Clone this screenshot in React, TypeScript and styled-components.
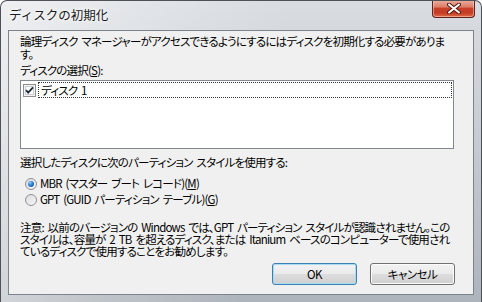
import React from "react";
import styled, { createGlobalStyle } from "styled-components";

const GlobalStyle = createGlobalStyle`
  html, body {
    margin: 0;
    padding: 0;
    background: #ffffff;
  }
  body {
    font-family: "Noto Sans CJK JP", "Liberation Sans", sans-serif;
  }
`;

const Window = styled.div`
  width: 482px;
  height: 302px;
  box-sizing: border-box;
  display: flex;
  flex-direction: column;
  border: 1px solid #4c5258;
  border-bottom: none;
  border-radius: 7px 7px 0 0;
  overflow: hidden;
  background:
    linear-gradient(100deg, rgba(255, 255, 255, 0.55) 0%, rgba(255, 255, 255, 0.2) 30%, rgba(255, 255, 255, 0) 55%),
    linear-gradient(to bottom, #d9dde2 0%, #c7ccd2 45%, #aeb4bb 100%);
`;

const TitleBar = styled.div`
  height: 29px;
  display: flex;
  justify-content: space-between;
  align-items: flex-start;
  padding-left: 8px;
  padding-right: 6px;
`;

const Title = styled.div`
  margin-top: 6px;
  font-size: 12.5px;
  line-height: 16px;
  color: #1a1a1a;
  text-shadow: 0 0 6px #ffffff, 0 0 3px #ffffff;
`;

const CloseButton = styled.div`
  width: 43px;
  height: 18px;
  margin-top: -1px;
  box-sizing: border-box;
  border: 1px solid #5e2219;
  border-top: none;
  border-radius: 0 0 4px 4px;
  display: flex;
  align-items: center;
  justify-content: center;
  background: linear-gradient(
    to bottom,
    #eab0a2 0%,
    #dc7e68 40%,
    #c8402a 50%,
    #c43a22 75%,
    #de6a48 100%
  );
  box-shadow: inset 0 0 0 1px rgba(255, 210, 200, 0.55);
`;

const Client = styled.div`
  flex: 1;
  margin: 0 7px 7px 7px;
  border: 1px solid #7b838c;
  background: #f0f0f0;
  padding: 4px 11px 0 11px;
  display: flex;
  flex-direction: column;
  font-size: 11.5px;
  color: #000000;
  font-feature-settings: "palt";
  letter-spacing: -0.8px;
  word-spacing: 2px;
`;

const Para = styled.div<{ $lh?: number; $mt?: number }>`
  line-height: ${(p) => p.$lh ?? 13}px;
  margin-top: ${(p) => p.$mt ?? 0}px;
  white-space: nowrap;
`;

const Key = styled.span`
  text-decoration: underline;
  text-underline-offset: 1px;
`;

const ListBox = styled.div`
  margin-top: 3px;
  width: 434px;
  height: 69px;
  box-sizing: border-box;
  border: 1px solid #828790;
  background: #ffffff;
  padding: 1px 0 0 2px;
`;

const ListItem = styled.div`
  display: flex;
  align-items: center;
  height: 16px;
`;

const FocusLabel = styled.div`
  flex: 1;
  height: 16px;
  margin-left: 2px;
  margin-right: 1px;
  box-sizing: border-box;
  border: 1px dotted #333333;
  line-height: 14px;
  padding-left: 2px;
`;

const Options = styled.div`
  display: flex;
  flex-direction: column;
  gap: 3px;
  margin-top: 8px;
  padding-left: 5px;
`;

const OptionRow = styled.label`
  display: flex;
  align-items: center;
  gap: 3px;
  height: 13px;
  line-height: 13px;
  white-space: nowrap;
`;

const Radio = styled.span<{ $checked?: boolean }>`
  width: 12px;
  height: 12px;
  box-sizing: border-box;
  border-radius: 50%;
  border: 1px solid #8e9196;
  display: flex;
  align-items: center;
  justify-content: center;
  background: linear-gradient(135deg, #dcdcdc 0%, #f6f6f6 100%);

  &::after {
    content: "";
    display: ${(p) => (p.$checked ? "block" : "none")};
    width: 6px;
    height: 6px;
    border-radius: 50%;
    background: radial-gradient(circle at 35% 30%, #8fd0ff 0%, #2a7fd4 45%, #0e4b94 100%);
  }
`;

const ButtonRow = styled.div`
  display: flex;
  justify-content: flex-end;
  gap: 13px;
  margin-top: 6px;
  padding-right: 7px;
`;

const Button = styled.button<{ $default?: boolean }>`
  width: 85px;
  height: 22px;
  box-sizing: border-box;
  padding: 0;
  border-radius: 3px;
  border: 1px solid ${(p) => (p.$default ? "#3c7fb1" : "#707070")};
  background: linear-gradient(to bottom, #f2f2f2 0%, #ebebeb 48%, #dddddd 52%, #cfcfcf 100%);
  box-shadow: inset 0 0 0 1px ${(p) => (p.$default ? "#a9dcf4" : "#fcfcfc")};
  font-family: "Noto Sans CJK JP", "Liberation Sans", sans-serif;
  font-size: 11.5px;
  font-feature-settings: "palt";
  letter-spacing: -0.5px;
  color: #000000;
`;

function CheckBox() {
  return (
    <svg width="13" height="13" viewBox="0 0 13 13">
      <rect x="0.5" y="0.5" width="12" height="12" fill="#f4f4f4" stroke="#8e8f8f" />
      <rect x="2.5" y="2.5" width="8" height="8" fill="#ffffff" stroke="#c8cbcf" />
      <path d="M3 6.2 L5.2 8.6 L10 3.4" fill="none" stroke="#1e2a3a" strokeWidth="1.8" />
    </svg>
  );
}

function CloseGlyph() {
  return (
    <svg width="14" height="11" viewBox="0 0 14 11">
      <path d="M2 1.5 L12 9.5 M12 1.5 L2 9.5" stroke="#5a1a12" strokeWidth="4" strokeLinecap="round" />
      <path d="M2 1.5 L12 9.5 M12 1.5 L2 9.5" stroke="#ffffff" strokeWidth="2" strokeLinecap="round" />
    </svg>
  );
}

export default function App() {
  return (
    <>
      <GlobalStyle />
      <Window>
        <TitleBar>
          <Title>ディスクの初期化</Title>
          <CloseButton>
            <CloseGlyph />
          </CloseButton>
        </TitleBar>
        <Client>
          <Para>
            論理ディスク マネージャーがアクセスできるようにするにはディスクを初期化する必要がありま
            <br />す。
          </Para>
          <Para $mt={3}>
            ディスクの選択(<Key>S</Key>):
          </Para>
          <ListBox>
            <ListItem>
              <CheckBox />
              <FocusLabel>ディスク 1</FocusLabel>
            </ListItem>
          </ListBox>
          <Para $mt={7}>選択したディスクに次のパーティション スタイルを使用する:</Para>
          <Options>
            <OptionRow>
              <Radio $checked />
              <span>
                MBR (マスター ブート レコード)(<Key>M</Key>)
              </span>
            </OptionRow>
            <OptionRow>
              <Radio />
              <span>
                GPT (GUID パーティション テーブル)(<Key>G</Key>)
              </span>
            </OptionRow>
          </Options>
          <Para $lh={12} $mt={15}>
            注意: 以前のバージョンの Windows では、GPT パーティション スタイルが認識されません。この
            <br />
            スタイルは、容量が 2 TB を超えるディスク、または Itanium ベースのコンピューターで使用され
            <br />
            ているディスクで使用することをお勧めします。
          </Para>
          <ButtonRow>
            <Button $default>OK</Button>
            <Button>キャンセル</Button>
          </ButtonRow>
        </Client>
      </Window>
    </>
  );
}
